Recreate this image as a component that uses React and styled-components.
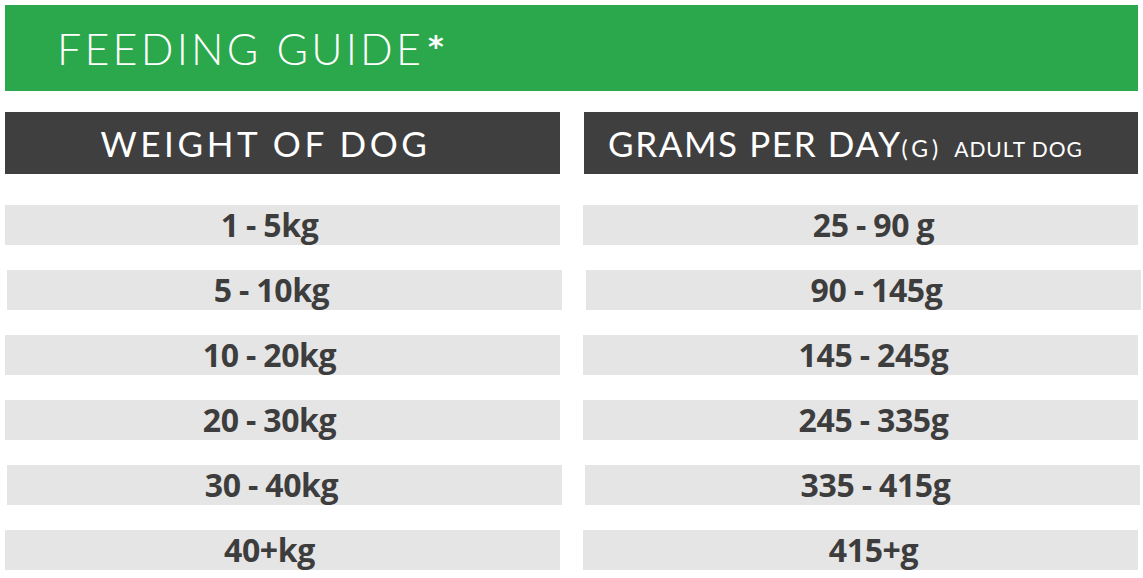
import React from 'react';
import styled, { createGlobalStyle } from 'styled-components';

const GlobalStyle = createGlobalStyle`
  html, body {
    margin: 0;
    padding: 0;
    background: #ffffff;
  }
`;

const Page = styled.div`
  padding: 5px 5px 0 5px;
  width: 1133px;
  font-family: 'Lato', 'Liberation Sans', sans-serif;
`;

const Banner = styled.div`
  height: 86px;
  background: #2aa84b;
  display: flex;
  align-items: center;
  padding-left: 52px;
  box-sizing: border-box;
`;

const Title = styled.h1`
  margin: 0;
  color: #ffffff;
  font-family: 'Lato', sans-serif;
  font-weight: 300;
  font-size: 43px;
  letter-spacing: 3.2px;
  line-height: 1;
  white-space: nowrap;
`;

const Star = styled.span`
  font-family: 'DejaVu Sans', sans-serif;
  font-weight: 700;
  font-size: 30px;
  position: relative;
  top: -8px;
  margin-left: 4px;
`;

const Columns = styled.div`
  display: grid;
  grid-template-columns: 555px 555px;
  column-gap: 23px;
  margin-top: 21px;
`;

const Column = styled.div`
  display: flex;
  flex-direction: column;
`;

const HeadBar = styled.div`
  height: 62px;
  background: #3f3f3f;
  color: #ffffff;
  display: flex;
  align-items: center;
  justify-content: ${p => (p.$start ? 'flex-start' : 'center')};
  padding-left: ${p => (p.$start ? '24px' : '0')};
  padding-right: ${p => (p.$start ? '0' : '34px')};
  margin-left: ${p => (p.$start ? '1px' : '0')};
  box-sizing: border-box;
  white-space: nowrap;
`;

const HeadText = styled.span`
  font-size: 35px;
  font-weight: 400;
  letter-spacing: ${p => p.$spacing}px;
  line-height: 1;
`;

const Small = styled.span`
  font-size: ${p => p.$size || 21}px;
  letter-spacing: ${p => p.$spacing}px;
  margin-left: ${p => p.$gap || 0}px;
`;

const Rows = styled.div`
  display: flex;
  flex-direction: column;
  gap: 25px;
  margin-top: 31px;
`;

const Row = styled.div`
  height: 40px;
  background: #e5e5e5;
  display: flex;
  align-items: center;
  justify-content: center;
  box-sizing: border-box;
  padding-left: ${p => (p.$right ? 26 : 0)}px;
  padding-right: ${p => (p.$right ? 0 : 26)}px;
  margin-left: ${p => p.$shift || 0}px;
  margin-right: ${p => -(p.$shift || 0)}px;
  font-family: 'Open Sans', 'Liberation Sans', sans-serif;
  font-weight: 700;
  font-size: 32px;
  letter-spacing: -0.4px;
  word-spacing: -0.5px;
  color: #3d3d3d;
  line-height: 1;
`;

const weights = [
  { text: '1 - 5kg', shift: 0 },
  { text: '5 - 10kg', shift: 2 },
  { text: '10 - 20kg', shift: 0 },
  { text: '20 - 30kg', shift: 0 },
  { text: '30 - 40kg', shift: 2 },
  { text: '40+kg', shift: 0 },
];

const grams = [
  { text: '25 - 90 g', shift: 0 },
  { text: '90 - 145g', shift: 3 },
  { text: '145 - 245g', shift: 0 },
  { text: '245 - 335g', shift: 0 },
  { text: '335 - 415g', shift: 2 },
  { text: '415+g', shift: 0 },
];

export default function App() {
  return (
    <>
      <GlobalStyle />
      <Page>
        <Banner>
          <Title>
            FEEDING GUIDE<Star>*</Star>
          </Title>
        </Banner>
        <Columns>
          <Column>
            <HeadBar>
              <HeadText $spacing={3.6}>WEIGHT OF DOG</HeadText>
            </HeadBar>
            <Rows>
              {weights.map((w, i) => (
                <Row key={i} $shift={w.shift}>{w.text}</Row>
              ))}
            </Rows>
          </Column>
          <Column>
            <HeadBar $start>
              <HeadText $spacing={1.6}>
                GRAMS PER DAY<Small $size={23} $spacing={4}>(G)</Small>
                <Small $gap={12} $spacing={1}>ADULT DOG</Small>
              </HeadText>
            </HeadBar>
            <Rows>
              {grams.map((g, i) => (
                <Row key={i} $right $shift={g.shift}>{g.text}</Row>
              ))}
            </Rows>
          </Column>
        </Columns>
      </Page>
    </>
  );
}
